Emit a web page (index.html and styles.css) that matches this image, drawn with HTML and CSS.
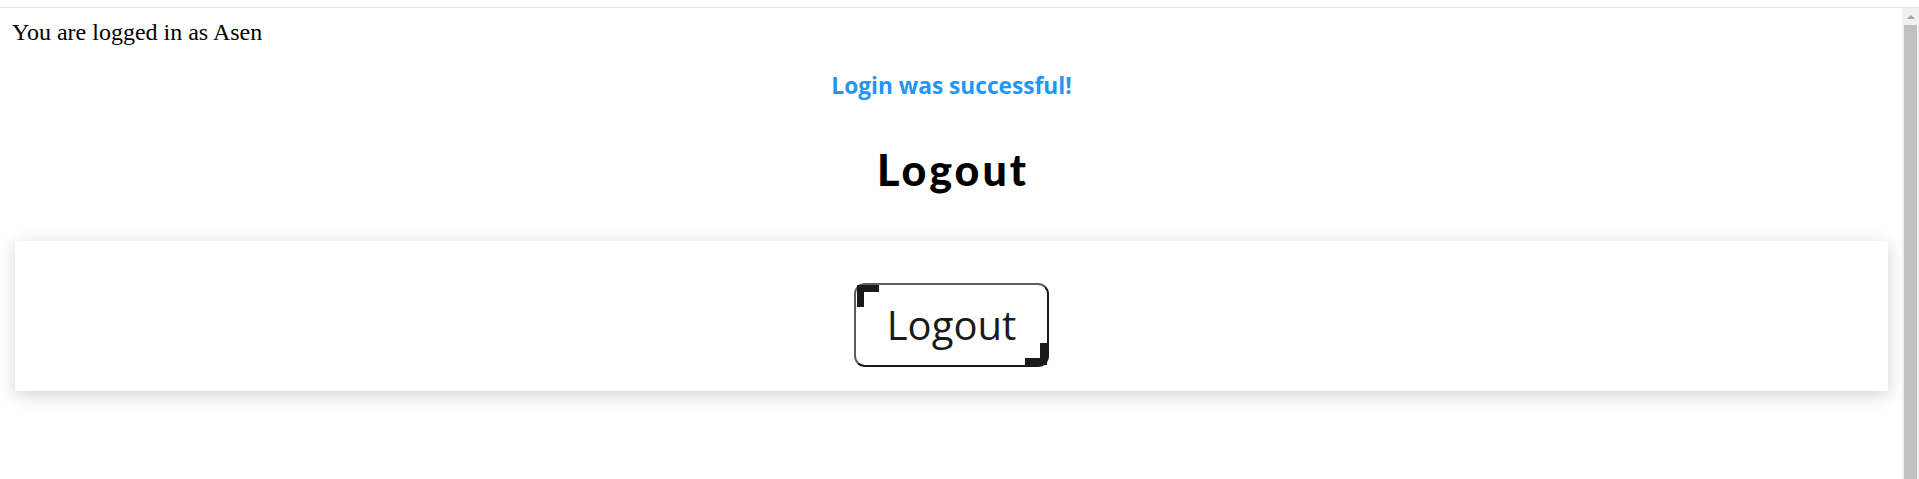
FILE: index.html
```html
<!DOCTYPE html>
<html lang="en">
<head>
<meta charset="utf-8">
<title>Logout</title>
<link rel="stylesheet" href="styles.css">
</head>
<body>
<div class="chrome-top"></div>
<div class="viewport">
  <main class="page">
    <p class="user">You are logged in as Asen</p>
    <h3 class="success">Login was successful!</h3>
    <h1 class="title">Logout</h1>
    <section class="card">
      <button class="btn-logout" type="button">Logout</button>
    </section>
  </main>
  <div class="scrollbar">
    <div class="sb-arrow"><span class="sb-tri"></span></div>
    <div class="sb-thumb"></div>
  </div>
</div>
</body>
</html>
```

FILE: styles.css
```css
html, body {
  margin: 0;
  padding: 0;
  height: 100%;
  overflow: hidden;
  background: #ffffff;
}

body {
  display: flex;
  flex-direction: column;
}

.chrome-top {
  height: 7px;
  border-bottom: 1px solid #e3e3e3;
  background: #ffffff;
  flex: none;
}

.viewport {
  flex: 1;
  display: flex;
  min-height: 0;
}

.page {
  flex: 1;
  padding: 11px 14px 0 15px;
  display: flex;
  flex-direction: column;
}

.user {
  margin: 0 0 0 -3px;
  font-family: "Liberation Serif", "Times New Roman", serif;
  font-size: 24px;
  line-height: 27px;
  color: #000;
}

.success {
  margin: 25px 0 0;
  text-align: center;
  font-family: "Open Sans", Lato, sans-serif;
  font-weight: 700;
  font-size: 22.7px;
  line-height: 30px;
  color: #2196f3;
}

.title {
  margin: 44px 0 0;
  text-align: center;
  font-family: Lato, "Open Sans", sans-serif;
  font-weight: 900;
  font-size: 43px;
  line-height: 50px;
  letter-spacing: 3px;
  text-indent: 3px;
  color: #000;
}

.card {
  margin-top: 45.5px;
  height: 150px;
  box-sizing: border-box;
  padding: 42px 0 24px;
  background: #ffffff;
  box-shadow: 0 4px 16px rgba(0, 0, 0, 0.18);
  display: flex;
  justify-content: center;
  align-items: flex-start;
}

.btn-logout {
  position: relative;
  box-sizing: border-box;
  width: 195px;
  height: 84px;
  padding: 0;
  border: 2px solid;
  border-color: #5e5e5e #1a1a1a #1a1a1a #5e5e5e;
  border-radius: 11px;
  background: #ffffff;
  color: #1a1a1a;
  font-family: "Open Sans", "Noto Sans", sans-serif;
  font-size: 40px;
  line-height: 40px;
  display: flex;
  align-items: center;
  justify-content: center;
  cursor: pointer;
}

.btn-logout::before,
.btn-logout::after {
  content: "";
  position: absolute;
  width: 22px;
  height: 22px;
  box-sizing: border-box;
  border: 0 solid #1a1a1a;
}

.btn-logout::before {
  top: 0;
  left: 1px;
  border-top-width: 7px;
  border-left-width: 7px;
}

.btn-logout::after {
  bottom: 0;
  right: 0;
  border-bottom-width: 7px;
  border-right-width: 7px;
}

.scrollbar {
  flex: none;
  width: 17px;
  background: #f1f1f1;
  display: flex;
  flex-direction: column;
  align-items: center;
}

.sb-arrow {
  height: 17px;
  width: 100%;
  display: flex;
  align-items: center;
  justify-content: center;
  flex: none;
}

.sb-tri {
  width: 0;
  height: 0;
  border-left: 4px solid transparent;
  border-right: 4px solid transparent;
  border-bottom: 4px solid #a3a3a3;
}

.sb-thumb {
  flex: 1;
  width: 13px;
  background: #c1c1c1;
}
```
